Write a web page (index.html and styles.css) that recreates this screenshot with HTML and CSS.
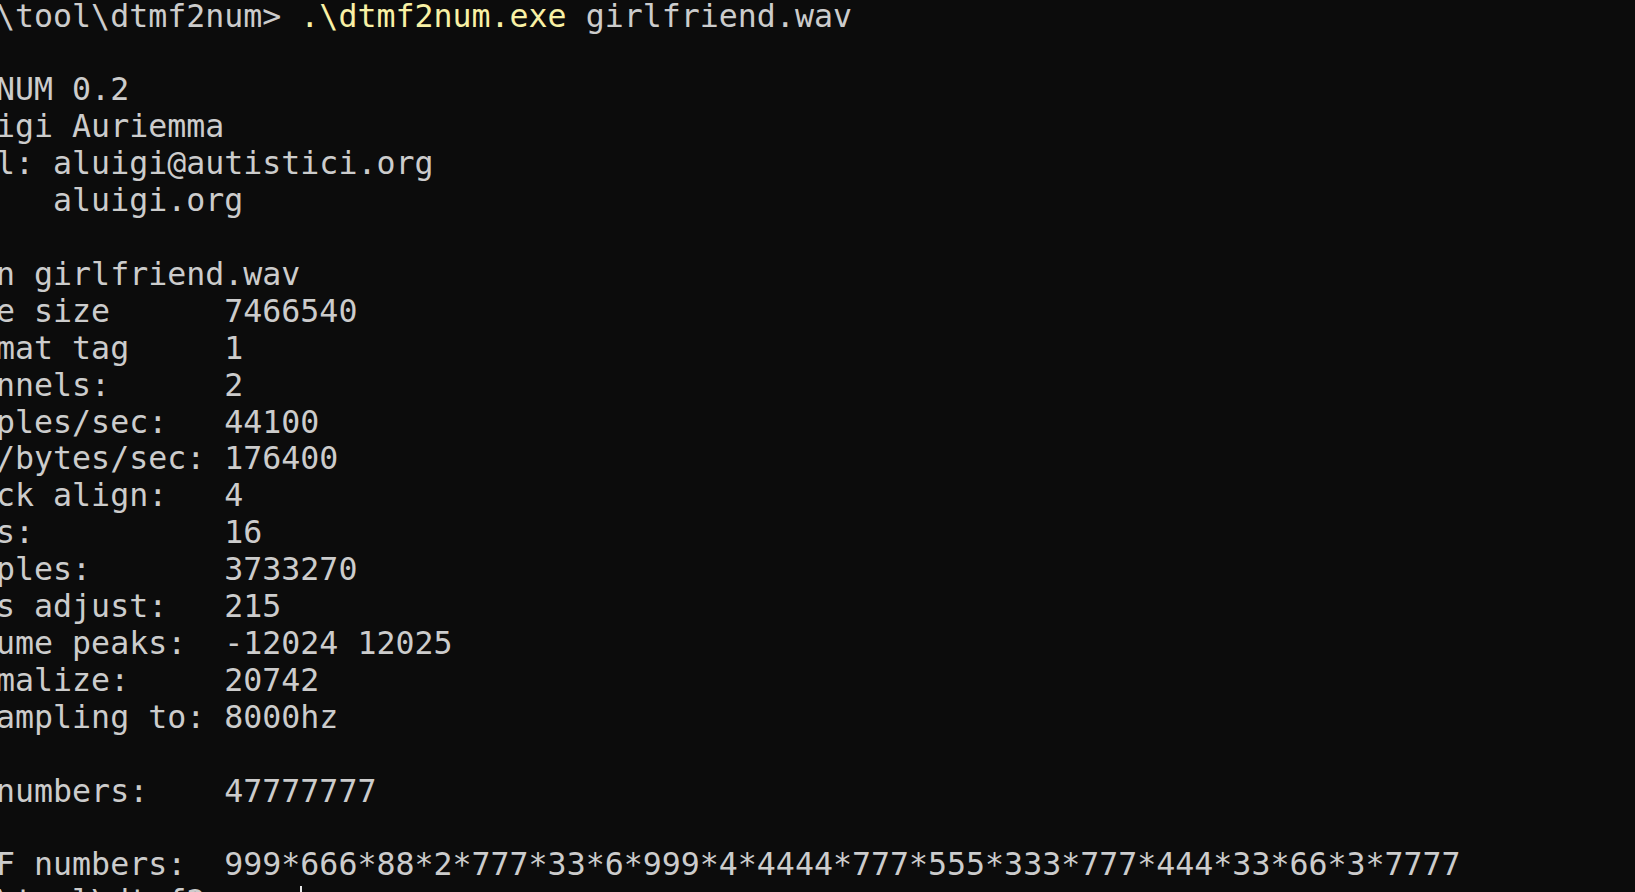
FILE: index.html
```html
<!DOCTYPE html>
<html lang="en">
<head>
<meta charset="utf-8">
<title>dtmf2num</title>
<link rel="stylesheet" href="styles.css">
</head>
<body>
<main class="terminal">
<pre class="output">\tool\dtmf2num&gt; <span class="cmd">.\dtmf2num.exe</span> girlfriend.wav

NUM 0.2
igi Auriemma
l: aluigi@autistici.org
   aluigi.org

n girlfriend.wav
e size      7466540
mat tag     1
nnels:      2
ples/sec:   44100
/bytes/sec: 176400
ck align:   4
s:          16
ples:       3733270
s adjust:   215
ume peaks:  -12024 12025
malize:     20742
ampling to: 8000hz

numbers:    47777777

F numbers:  999*666*88*2*777*33*6*999*4*4444*777*555*333*777*444*33*66*3*7777
\tool\dtmf2num&gt; <span class="cursor"></span></pre>
</main>
</body>
</html>
```
FILE: styles.css
```css
html, body {
  margin: 0;
  padding: 0;
  background: #0c0c0c;
  height: 100%;
  overflow: hidden;
}

.terminal {
  width: 100%;
  height: 100%;
  overflow: hidden;
}

.output {
  margin: -2.4px 0 0 -4px;
  font-family: "DejaVu Sans Mono", "Liberation Mono", monospace;
  font-size: 31.6px;
  line-height: 36.9px;
  color: #cccccc;
  white-space: pre;
}

.cmd {
  color: #f9f1a5;
}

.cursor {
  display: inline-block;
  width: 2px;
  height: 34px;
  background: #e6e6e6;
  vertical-align: -8px;
}
```
